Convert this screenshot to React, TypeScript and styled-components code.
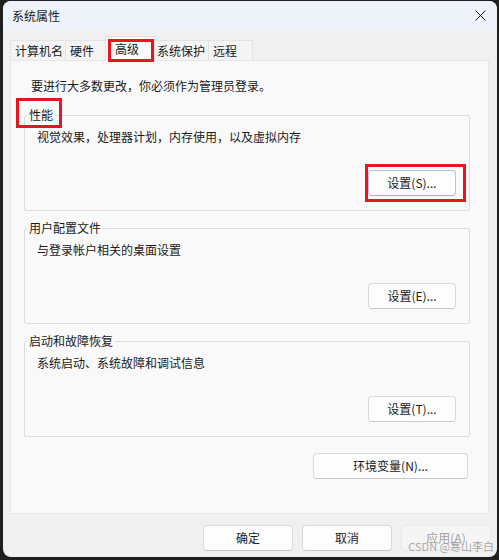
import React from 'react'
import styled, { createGlobalStyle, css } from 'styled-components'

const GlobalStyle = createGlobalStyle`
  html, body {
    margin: 0;
    padding: 0;
    background: #1f1f1f;
  }
  body {
    font-family: "Noto Sans CJK SC", "Noto Sans", "Liberation Sans", sans-serif;
    font-size: 12px;
    line-height: 16px;
    color: #1a1a1a;
  }
`

const Window = styled.div`
  position: relative;
  margin: 1px 2px 0 3px;
  width: 494px;
  height: 556px;
  border-radius: 8px;
  overflow: hidden;
  background: #f0f0f0;
  display: flex;
  flex-direction: column;
`

const TitleBar = styled.div`
  height: 29px;
  flex: none;
  background: #eef3fa;
  display: flex;
  align-items: center;
  justify-content: space-between;
  padding: 0 11px 0 9px;
`

const Title = styled.span`
  font-size: 12px;
`

const Body = styled.div`
  display: flex;
  flex-direction: column;
  padding: 6px 8px 0 7px;
`

const TabStrip = styled.div`
  display: flex;
  align-items: flex-end;
  height: 24px;
  padding-left: 1px;
`

const Tab = styled.div<{ $w: number; $active?: boolean }>`
  position: relative;
  box-sizing: border-box;
  width: ${p => p.$w}px;
  height: 20px;
  padding-left: 4px;
  display: flex;
  align-items: center;
  background: #f4f4f4;
  border: 1px solid #e3e3e3;
  border-bottom: none;
  margin-left: -1px;
  white-space: nowrap;
  ${p => p.$active && css`
    width: ${p.$w + 4}px;
    height: 25px;
    margin: 0 -2px -1px -3px;
    padding-left: 9px;
    background: #f9f9f9;
    border-color: #e0e0e0;
    z-index: 1;
  `}
`

const Mark = styled.span<{ $l: number; $t: number; $w: number; $h: number }>`
  position: absolute;
  left: ${p => p.$l}px;
  top: ${p => p.$t}px;
  width: ${p => p.$w}px;
  height: ${p => p.$h}px;
  box-sizing: border-box;
  border: 3px solid #e8141f;
  pointer-events: none;
  z-index: 2;
`

const Panel = styled.div`
  box-sizing: border-box;
  height: 454px;
  background: #f9f9f9;
  border: 1px solid #e6e6e6;
  padding: 17px 18px 0 13px;
  display: flex;
  flex-direction: column;
`

const Intro = styled.div`
  margin-left: 7px;
  margin-bottom: 13px;
`

const Group = styled.fieldset`
  margin: 0 0 9px 0;
  min-width: 0;
  border: 1px solid #dcdcdc;
  border-radius: 2px;
  padding: 6px 13px 14px 12px;
  display: flex;
  flex-direction: column;
`

const Legend = styled.legend`
  position: relative;
  padding: 0 2px;
  margin-left: -10px;
  line-height: 16px;
`

const Desc = styled.div`
  line-height: 16px;
`

const ButtonRow = styled.div<{ $top: number }>`
  display: flex;
  justify-content: flex-end;
  margin-top: ${p => p.$top}px;
`

const Button = styled.button<{ $w: number; $focus?: boolean }>`
  box-sizing: border-box;
  width: ${p => p.$w}px;
  height: 26px;
  padding: 0;
  font: inherit;
  font-size: 12px;
  color: #1b1b1b;
  background: #fdfdfd;
  border: 1px solid #d9d9d9;
  border-bottom-color: #c8c8c8;
  border-radius: 4px;
  ${p => p.$focus && css`
    border-color: #a9c7e8;
    border-bottom-color: #8db3de;
  `}
  &:disabled {
    color: #a2a2a2;
    background: #f5f5f5;
    border-color: #e8e8e8;
  }
`

const MarkWrap = styled.div`
  position: relative;
`

const EnvRow = styled.div`
  display: flex;
  justify-content: flex-end;
  margin-top: 7px;
  padding-right: 2px;
`

const Footer = styled.div`
  display: flex;
  justify-content: flex-end;
  gap: 9px;
  margin-top: 11px;
  margin-right: -2px;
`

const Watermark = styled.span`
  position: absolute;
  right: 3px;
  bottom: 4px;
  font-size: 11px;
  line-height: 13px;
  color: rgba(140, 140, 140, 0.75);
  pointer-events: none;
`

const CloseIcon = () => (
  <svg width="11" height="11" viewBox="0 0 11 11">
    <path d="M0.5 0.5 L10.5 10.5 M10.5 0.5 L0.5 10.5" stroke="#1a1a1a" strokeWidth="1" fill="none" />
  </svg>
)

const tabs = [
  { label: '计算机名', w: 56 },
  { label: '硬件', w: 43 },
  { label: '高级', w: 46, active: true },
  { label: '系统保护', w: 57 },
  { label: '远程', w: 45 },
]

const App = () => {
  return (
    <>
      <GlobalStyle />
      <Window>
        <TitleBar>
          <Title>系统属性</Title>
          <CloseIcon />
        </TitleBar>
        <Body>
          <TabStrip>
            {tabs.map(t => (
              <Tab key={t.label} $w={t.w} $active={t.active}>
                {t.label}
                {t.active && <Mark $l={2} $t={2} $w={46} $h={23} />}
              </Tab>
            ))}
          </TabStrip>
          <Panel>
            <Intro>要进行大多数更改，你必须作为管理员登录。</Intro>

            <Group>
              <Legend>
                性能
                <Mark $l={-11} $t={-9} $w={46} $h={30} />
              </Legend>
              <Desc>视觉效果，处理器计划，内存使用，以及虚拟内存</Desc>
              <ButtonRow $top={25}>
                <MarkWrap>
                  <Button $w={88} $focus>设置(S)...</Button>
                  <Mark $l={-3} $t={-6} $w={101} $h={38} />
                </MarkWrap>
              </ButtonRow>
            </Group>

            <Group>
              <Legend>用户配置文件</Legend>
              <Desc>与登录帐户相关的桌面设置</Desc>
              <ButtonRow $top={25}>
                <Button $w={88}>设置(E)...</Button>
              </ButtonRow>
            </Group>

            <Group>
              <Legend>启动和故障恢复</Legend>
              <Desc>系统启动、系统故障和调试信息</Desc>
              <ButtonRow $top={25}>
                <Button $w={88}>设置(T)...</Button>
              </ButtonRow>
            </Group>

            <EnvRow>
              <Button $w={155}>环境变量(N)...</Button>
            </EnvRow>
          </Panel>
          <Footer>
            <Button $w={90}>确定</Button>
            <Button $w={90}>取消</Button>
            <Button $w={90} disabled>应用(A)</Button>
          </Footer>
        </Body>
        <Watermark>CSDN @寒山李白</Watermark>
      </Window>
    </>
  )
}

export default App
